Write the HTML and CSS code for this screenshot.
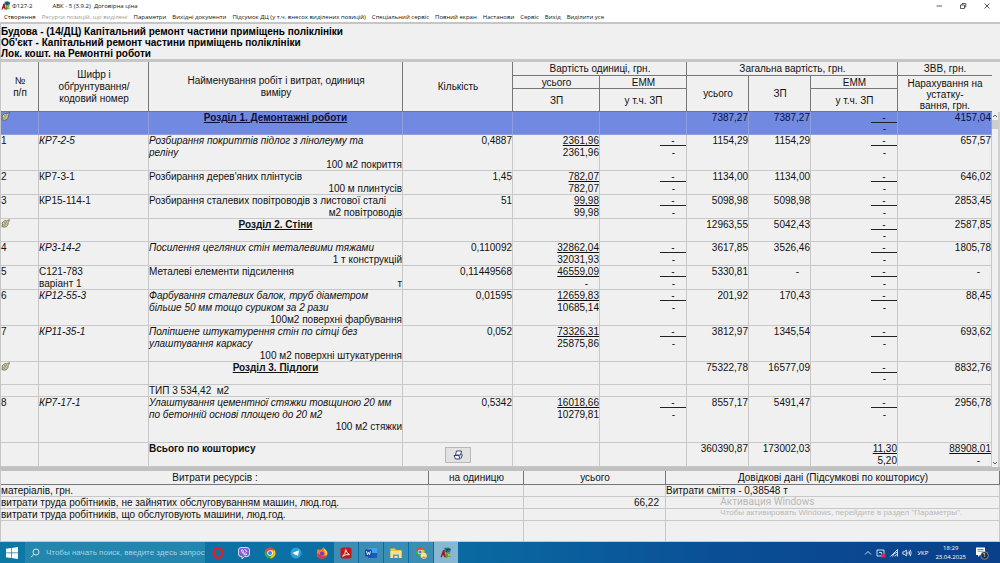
FILE: index.html
```
<!DOCTYPE html>
<html lang="uk">

<head>
  <meta charset="UTF-8">
  <title>АВК - 5 (3.9.2) Договірна ціна</title>
  <link rel="stylesheet" href="styles.css">
</head>

<body>

  <!-- shared icons -->
  <svg class="defs" aria-hidden="true">
    <symbol id="hand" viewBox="0 0 9 9">
      <path d="M1 4 4 1.500 6 2 8.300.6 8 2.500 6.800 3.600 7.200 5 5.500 7.600 3 8.200.8 7.400 1.500 6z" fill="#ece2a8" stroke="#4a4838" stroke-width=".7" />
      <path d="M2 5.600 5.500 4.200M2.300 6.800 5.600 5.600M3 3.700 6 3" stroke="#4a4838" stroke-width=".5" />
    </symbol>
    <symbol id="avk" viewBox="0 0 14 14">
      <path d="M5 1 9 .5 13 2 12 6 8 7 5 5z" fill="#2d7f8c" />
      <path d="M6 2 10 5M10 1 7 6M12 3 8 3" stroke="#15404c" stroke-width=".9" />
      <path d="M.5 12 3.500 3.500 5 3.500 7 12 5 12 4.500 10 2.800 10 2.300 12z" fill="#a4182c" />
      <path d="M7 6 9 8 12 6 11 9 13 12 10 11 7 13z" fill="#5d9a2c" />
      <path d="M9 8 13 9.500 10 10.500z" fill="#e5cf35" />
    </symbol>
    <symbol id="chrome" viewBox="0 0 24 24">
      <circle cx="12" cy="12" r="11" fill="#34a853" />
      <path d="M2.500 6.500A11 11 0 0 1 21.500 6.500L12 7 7.700 14.500z" fill="#ea4335" />
      <path d="M21.500 6.500A11 11 0 0 1 12 23L16.300 14.500 12 6.500z" fill="#fbbc05" />
      <circle cx="12" cy="12" r="5.500" fill="#fff" />
      <circle cx="12" cy="12" r="4.200" fill="#4285f4" />
    </symbol>
  </svg>

  <header class="titlebar">
    <svg class="app-icon"><use href="#avk" /></svg>
    <span class="form-no">Ф127-2</span>
    <span class="app-name">АВК - 5 (3.9.2)&nbsp; Договірна ціна</span>
    <div class="win-buttons">
      <button aria-label="Згорнути"><svg viewBox="0 0 8 8"><path d="M1.500 4H7" /></svg></button>
      <button aria-label="Відновити"><svg viewBox="0 0 8 8"><path d="M1.500 3H5.500V6.500H1.500zM3 3V1.500H6.800V5H5.500" /></svg></button>
      <button aria-label="Закрити"><svg viewBox="0 0 8 8"><path d="M1.500 1.500 6.500 6.500M6.500 1.500 1.500 6.500" /></svg></button>
    </div>
  </header>

  <nav class="menubar">
    <button>Створення</button>
    <button disabled>Ресурси позицій, що виділені</button>
    <button>Параметри</button>
    <button>Вихідні документи</button>
    <button>Підсумок ДЦ (у т.ч. внесок виділених позицій)</button>
    <button>Спеціальний сервіс</button>
    <button>Повний екран</button>
    <button>Настанови</button>
    <button>Сервіс</button>
    <button>Вихід</button>
    <button>Виділити усе</button>
  </nav>

  <section class="object-info">
    <p>Будова - (14/ДЦ) Капітальний ремонт частини приміщень поліклініки</p>
    <p>Об'єкт - Капітальний ремонт частини приміщень поліклініки</p>
    <p>Лок. кошт. на Ремонтні роботи</p>
  </section>

  <main class="estimate">
    <table class="works">
      <colgroup>
        <col class="c-num">
        <col class="c-code">
        <col>
        <col class="c-qty">
        <col class="c-unit">
        <col class="c-emm">
        <col class="c-total">
        <col class="c-zp">
        <col class="c-emm">
        <col class="c-zvv">
      </colgroup>
      <thead>
        <tr class="h-top">
          <th rowspan="3">№<br>п/п</th>
          <th rowspan="3">Шифр і<br>обґрунтування/<br>кодовий номер</th>
          <th rowspan="3">Найменування робіт і витрат, одиниця<br>виміру</th>
          <th rowspan="3">Кількість</th>
          <th colspan="2">Вартість одиниці, грн.</th>
          <th colspan="3">Загальна вартість, грн.</th>
          <th class="last">ЗВВ, грн.</th>
        </tr>
        <tr class="h-mid">
          <th>усього</th>
          <th>ЕММ</th>
          <th rowspan="2">усього</th>
          <th rowspan="2">ЗП</th>
          <th>ЕММ</th>
          <th rowspan="2" class="last tight">Нарахування на<br>устатку-<br>вання, грн.</th>
        </tr>
        <tr class="h-low">
          <th>ЗП</th>
          <th>у т.ч. ЗП</th>
          <th>у т.ч. ЗП</th>
        </tr>
      </thead>
      <tbody>
        <tr class="section selected">
          <td><svg class="hand"><use href="#hand" /></svg></td>
          <td></td>
          <td class="name">Розділ 1. Демонтажні роботи</td>
          <td></td>
          <td></td>
          <td></td>
          <td>7387,27</td>
          <td>7387,27</td>
          <td><span class="none">-</span><span class="dash">-</span></td>
          <td>4157,04</td>
        </tr>
        <tr class="lines-3 own">
          <td>1</td>
          <td>КР7-2-5</td>
          <td><span class="work">Розбирання покриттів підлог з лінолеуму та реліну</span><span class="unit">100 м2 покриття</span></td>
          <td>0,4887</td>
          <td><u>2361,96</u><br>2361,96</td>
          <td><span class="none">-</span><span class="dash">-</span></td>
          <td>1154,29</td>
          <td>1154,29</td>
          <td><span class="none">-</span><span class="dash">-</span></td>
          <td>657,57</td>
        </tr>
        <tr class="lines-2">
          <td>2</td>
          <td>КР7-3-1</td>
          <td><span class="work">Розбирання дерев'яних плінтусів</span><span class="unit">100 м плинтусів</span></td>
          <td>1,45</td>
          <td><u>782,07</u><br>782,07</td>
          <td><span class="none">-</span><span class="dash">-</span></td>
          <td>1134,00</td>
          <td>1134,00</td>
          <td><span class="none">-</span><span class="dash">-</span></td>
          <td>646,02</td>
        </tr>
        <tr class="lines-2">
          <td>3</td>
          <td>КР15-114-1</td>
          <td><span class="work">Розбирання сталевих повітроводів з листової сталі</span><span class="unit">м2 повітроводів</span></td>
          <td>51</td>
          <td><u>99,98</u><br>99,98</td>
          <td><span class="none">-</span><span class="dash">-</span></td>
          <td>5098,98</td>
          <td>5098,98</td>
          <td><span class="none">-</span><span class="dash">-</span></td>
          <td>2853,45</td>
        </tr>
        <tr class="section">
          <td><svg class="hand"><use href="#hand" /></svg></td>
          <td></td>
          <td class="name">Розділ 2. Стіни</td>
          <td></td>
          <td></td>
          <td></td>
          <td>12963,55</td>
          <td>5042,43</td>
          <td><span class="none">-</span><span class="dash">-</span></td>
          <td>2587,85</td>
        </tr>
        <tr class="lines-2 own">
          <td>4</td>
          <td>КР3-14-2</td>
          <td><span class="work">Посилення цегляних стін металевими тяжами</span><span class="unit">1 т конструкцій</span></td>
          <td>0,110092</td>
          <td><u>32862,04</u><br>32031,93</td>
          <td><span class="none">-</span><span class="dash">-</span></td>
          <td>3617,85</td>
          <td>3526,46</td>
          <td><span class="none">-</span><span class="dash">-</span></td>
          <td>1805,78</td>
        </tr>
        <tr class="lines-2">
          <td>5</td>
          <td>С121-783<br>варіант 1</td>
          <td><span class="work">Металеві елементи підсилення</span><span class="unit">т</span></td>
          <td>0,11449568</td>
          <td><u>46559,09</u><span class="dash">-</span></td>
          <td><span class="none">-</span><span class="dash">-</span></td>
          <td>5330,81</td>
          <td><span class="dash">-</span></td>
          <td><span class="none">-</span><span class="dash">-</span></td>
          <td><span class="dash">-</span></td>
        </tr>
        <tr class="lines-3 own">
          <td>6</td>
          <td>КР12-55-3</td>
          <td><span class="work">Фарбування сталевих балок, труб діаметром більше 50 мм тощо суриком за 2 рази</span><span class="unit">100м2 поверхні фарбування</span></td>
          <td>0,01595</td>
          <td><u>12659,83</u><br>10685,14</td>
          <td><span class="none">-</span><span class="dash">-</span></td>
          <td>201,92</td>
          <td>170,43</td>
          <td><span class="none">-</span><span class="dash">-</span></td>
          <td>88,45</td>
        </tr>
        <tr class="lines-3 own">
          <td>7</td>
          <td>КР11-35-1</td>
          <td><span class="work">Поліпшене штукатурення стін по сітці без улаштування каркасу</span><span class="unit">100 м2 поверхні штукатурення</span></td>
          <td>0,052</td>
          <td><u>73326,31</u><br>25875,86</td>
          <td><span class="none">-</span><span class="dash">-</span></td>
          <td>3812,97</td>
          <td>1345,54</td>
          <td><span class="none">-</span><span class="dash">-</span></td>
          <td>693,62</td>
        </tr>
        <tr class="section">
          <td><svg class="hand"><use href="#hand" /></svg></td>
          <td></td>
          <td class="name">Розділ 3. Підлоги</td>
          <td></td>
          <td></td>
          <td></td>
          <td>75322,78</td>
          <td>16577,09</td>
          <td><span class="none">-</span><span class="dash">-</span></td>
          <td>8832,76</td>
        </tr>
        <tr class="lines-1">
          <td></td>
          <td></td>
          <td>ТИП 3 534,42&nbsp; м2</td>
          <td></td>
          <td></td>
          <td></td>
          <td></td>
          <td></td>
          <td></td>
          <td></td>
        </tr>
        <tr class="lines-4 own">
          <td>8</td>
          <td>КР7-17-1</td>
          <td><span class="work">Улаштування цементної стяжки товщиною 20 мм по бетонній основі площею до 20 м2</span><span class="unit">100 м2 стяжки</span></td>
          <td>0,5342</td>
          <td><u>16018,66</u><br>10279,81</td>
          <td><span class="none">-</span><span class="dash">-</span></td>
          <td>8557,17</td>
          <td>5491,47</td>
          <td><span class="none">-</span><span class="dash">-</span></td>
          <td>2956,78</td>
        </tr>
        <tr class="total">
          <td></td>
          <td></td>
          <td class="name">Всього по кошторису</td>
          <td class="tool">
            <button aria-label="Перерахувати">
              <svg viewBox="0 0 10 10"><path d="M3.500 1H8.500L7.800 5H2.500zM1 5.500H6L7 9H2.500zM8 3.500 9.300 5 8 8.500" /></svg>
            </button>
          </td>
          <td></td>
          <td></td>
          <td>360390,87</td>
          <td>173002,03</td>
          <td><u>11,30</u><br>5,20</td>
          <td><u>88908,01</u><span class="dash">-</span></td>
        </tr>
      </tbody>
    </table>
    <div class="scrollbar">
      <button aria-label="Вгору"><svg viewBox="0 0 6 6"><path d="M1 4 3 2 5 4" /></svg></button>
      <div class="thumb"></div>
      <button aria-label="Вниз"><svg viewBox="0 0 6 6"><path d="M1 2 3 4 5 2" /></svg></button>
    </div>
  </main>

  <section class="resources">
    <table>
      <colgroup>
        <col>
        <col class="r-unit">
        <col class="r-total">
        <col class="r-info">
      </colgroup>
      <thead>
        <tr>
          <th>Витрати ресурсів :</th>
          <th>на одиницю</th>
          <th>усього</th>
          <th>Довідкові дані (Підсумкові по кошторису)</th>
        </tr>
      </thead>
      <tbody>
        <tr>
          <td>матеріалів, грн.</td>
          <td></td>
          <td></td>
          <td>Витрати сміття - 0,38548 т</td>
        </tr>
        <tr>
          <td>витрати труда робітників, не зайнятих обслуговуванням машин, люд.год.</td>
          <td></td>
          <td>66,22</td>
          <td></td>
        </tr>
        <tr>
          <td>витрати труда робітників, що обслуговують машини, люд.год.</td>
          <td></td>
          <td></td>
          <td></td>
        </tr>
        <tr class="rest">
          <td></td>
          <td></td>
          <td></td>
          <td></td>
        </tr>
      </tbody>
    </table>
    <div class="watermark">
      <p class="big">Активация Windows</p>
      <p>Чтобы активировать Windows, перейдите в раздел "Параметры".</p>
    </div>
  </section>

  <footer class="taskbar">
    <button class="start" aria-label="Пуск">
      <svg viewBox="0 0 12 12"><path d="M0 1.700 5 1V5.600H0zM5.700.9 12 0V5.600H5.700zM0 6.300H5V11L0 10.300zM5.700 6.300H12V12L5.700 11.100z" fill="#fff" /></svg>
    </button>
    <label class="search">
      <svg viewBox="0 0 10 10"><circle cx="6" cy="4" r="3" /><path d="M4 6.200 1 9.300" /></svg>
      <input type="text" aria-label="Поиск" placeholder="Чтобы начать поиск, введите здесь запрос">
    </label>
    <div class="pinned">
      <button aria-label="Opera">
        <svg viewBox="0 0 12 12"><ellipse cx="6" cy="6" rx="4.300" ry="4.700" fill="none" stroke="#d8202f" stroke-width="2.600" /></svg>
      </button>
      <button aria-label="Viber">
        <svg viewBox="0 0 12 12"><path d="M3 .5H9Q11.500.5 11.500 3V7Q11.500 9.600 9 9.600H6.500L4 12V9.600H3Q.5 9.600.5 7V3Q.5.5 3 .5z" fill="#7d62d6" stroke="#e8e2ff" stroke-width=".9" /><path d="M3.700 2.800Q3 4 4.500 6 6 8 8 8L8.600 7 7.300 6 6.500 6.500 5.200 4.800 5.500 4 4.600 2.700zM6.500 2.500Q8.700 2.800 8.800 5" fill="none" stroke="#fff" stroke-width=".8" /></svg>
      </button>
      <button aria-label="Chrome"><svg><use href="#chrome" /></svg></button>
      <button aria-label="Telegram">
        <svg viewBox="0 0 12 12"><circle cx="6" cy="6" r="5.500" fill="#2ba0da" /><path d="M2.200 6 9 3.200 8 9 5.800 7.500 4.800 8.400 4.600 6.900z" fill="#fff" /></svg>
      </button>
      <button aria-label="Firefox">
        <svg viewBox="0 0 12 12"><path d="M1 4 2 1.800 3.500 3Q5 2 5.500 2.500L7.500.3Q8 2 10 3.200 11.700 5 11.300 7.500 10 11.500 6 11.600 1.500 11.300.8 7.500z" fill="#ff7a28" /><path d="M7.500.3Q8 2 10 3.200 11.700 5 11.300 7.500L9.500 8 8.500 4z" fill="#ffd43a" /><path d="M1 6Q1 11 6 11.600 9 11.400 10.500 9.300L6 9z" fill="#ee2d55" /><circle cx="6" cy="6.600" r="2.200" fill="#7a3bc8" /></svg>
      </button>
    </div>
    <div class="running">
      <button aria-label="Acrobat">
        <svg viewBox="0 0 12 12"><rect x=".5" y=".5" width="11" height="11" rx="2" fill="#c4161c" /><path d="M5.700 2.500Q6.300 6 9.500 7.600 6 6.800 2.600 9.300 5.600 6.800 5.700 2.500z" fill="none" stroke="#fff" stroke-width=".9" /></svg>
      </button>
      <button aria-label="Word">
        <svg viewBox="0 0 12 12"><rect x="3" y="1" width="9" height="10" rx="1" fill="#41a5ee" /><rect x="3" y="6" width="9" height="5" fill="#185abd" /><rect x="0" y="2.500" width="7" height="7" rx="1" fill="#174ea6" /><path d="M1.500 4.200 2.500 7.800 3.500 5 4.500 7.800 5.500 4.200" fill="none" stroke="#fff" stroke-width=".8" /></svg>
      </button>
      <button aria-label="Провідник">
        <svg viewBox="0 0 12 12"><path d="M.5 1.500H5L6 3H11.500V11H.5z" fill="#f5c242" /><path d="M.5 4H11.500V11H.5z" fill="#fde28a" /><path d="M3 11V7.500H9V11H7.500V9H4.500V11z" fill="#4e9fd8" /></svg>
      </button>
      <button aria-label="Chrome, профіль">
        <svg viewBox="0 0 12 12"><use href="#chrome" width="10" height="10" /><circle cx="8.800" cy="8.800" r="3" fill="#f5e2a0" /><path d="M6.800 11Q8.800 7.500 10.800 11z" fill="#d99a28" /></svg>
      </button>
      <button class="active" aria-label="АВК-5"><svg><use href="#avk" /></svg></button>
    </div>
    <div class="tray">
      <svg viewBox="0 0 10 10"><path d="M2 6.500 5 3.500 8 6.500" /></svg>
      <svg viewBox="0 0 10 10"><path d="M1 2H8V8H1zM3 4.500H5.500V6.500" /><rect x="5.500" y="5.500" width="4" height="4" fill="#e0244a" stroke="none" /></svg>
      <svg viewBox="0 0 10 10"><path d="M1.500 8.500 8.500 1.500V8.500M3.500 8.500Q4 5 8.500 4M5.800 8.500Q6 7 8.500 6.500" /></svg>
      <svg viewBox="0 0 10 10"><path d="M.8 3.800H2.200L4.300 2V8L2.200 6.200H.8zM5.700 3.800Q6.500 5 5.700 6.200M7 2.700Q8.300 5 7 7.300M8.300 1.700Q10 5 8.300 8.300" /></svg>
      <span class="lang">УКР</span>
      <time class="clock" datetime="2025-04-23T18:29">18:29<br>23.04.2025</time>
      <button class="notify" aria-label="Сповіщення">
        <svg viewBox="0 0 14 14"><path d="M1 1.500H10V9H5L3 11V9H1z" fill="#fff" /><path d="M2.500 3.500H8.500M2.500 5.200H8.500" stroke="#2a5c98" stroke-width=".7" /><circle cx="9.500" cy="9.500" r="3.800" fill="#1e2c3c" stroke="#b9c8d8" stroke-width=".6" /></svg>
        <span class="count">1</span>
      </button>
    </div>
  </footer>

</body>

</html>
```
FILE: styles.css
```
* {
  box-sizing: border-box;
}

body {
  margin: 0;
  min-height: 100vh;
  display: flex;
  flex-direction: column;
  font-family: "Liberation Sans", Arial, sans-serif;
  font-size: 10px;
  line-height: 12px;
  color: #111;
  background-color: #f0f0f0;
}

p {
  margin: 0;
}

button {
  padding: 0;
  border: 0;
  background: none;
  font: inherit;
  color: inherit;
}

.defs {
  position: absolute;
  width: 0;
  height: 0;
}

/* window title and menu */
.titlebar,
.menubar {
  display: flex;
  align-items: center;
  height: 12px;
  background-color: #fff;
  font-family: "Open Sans", sans-serif;
  font-size: 6px;
  line-height: 10px;
}

.titlebar {
  padding-left: 1px;
}

.app-icon {
  width: 10px;
  height: 10px;
  margin-right: 1px;
}

.app-name {
  margin-left: 20px;
}

.win-buttons {
  display: flex;
  gap: 16px;
  margin-left: auto;
  padding-right: 9px;
}

.win-buttons button,
.win-buttons svg {
  display: block;
  width: 8px;
  height: 8px;
}

.win-buttons svg,
.scrollbar svg {
  fill: none;
  stroke: #333;
  stroke-width: 0.8;
}

.menubar {
  gap: 6px;
  padding-left: 4px;
  border-bottom: 2px solid #c6c6c6;
  white-space: nowrap;
}

.menubar button:disabled {
  color: #999;
}

/* names of the project */
.object-info {
  padding-top: 2px;
  line-height: 11px;
  font-weight: bold;
  color: #000;
  border-left: 1px solid #c6c6c6;
  border-bottom: 3px solid #c6c6c6;
}

/* estimate grid */
.estimate {
  display: flex;
  border-left: 1px solid #c6c6c6;
}

table {
  width: 100%;
  table-layout: fixed;
  border-spacing: 0;
}

th,
td {
  padding: 0;
  vertical-align: top;
  font-weight: normal;
}

th {
  vertical-align: middle;
  box-shadow: inset -1px -1px 0 #777;
}

.c-num {
  width: 38px;
}

.c-code,
.c-qty {
  width: 110px;
}

.c-unit,
.c-emm {
  width: 87px;
}

.c-total,
.c-zp {
  width: 62px;
}

.c-zvv {
  width: 94px;
}

.h-top {
  height: 14px;
}

.h-mid {
  height: 13px;
}

.h-low {
  height: 23px;
}

.works .last {
  box-shadow: inset 0 -1px 0 #777;
}

.works .tight {
  line-height: 11px;
}

.works td {
  padding-right: 1px;
  text-align: right;
  box-shadow: inset -1px -1px 0 #c8c8c8;
}

.works td:nth-child(-n + 3) {
  text-align: left;
}

.section {
  height: 23px;
}

.total {
  height: 24px;
}

.lines-1 {
  height: 12px;
}

.lines-2 {
  height: 24px;
}

.lines-3 {
  height: 36px;
}

.lines-4 {
  height: 46px;
}

.hand {
  display: block;
  width: 9px;
  height: 9px;
}

.work,
.unit,
.dash {
  display: block;
}

.work {
  padding-right: 8px;
}

.unit {
  text-align: right;
}

.own td:nth-child(2),
.own .work {
  font-style: italic;
}

.works .section .name {
  text-align: center;
  font-weight: bold;
  text-decoration: underline;
}

.total .name {
  font-weight: bold;
}

.works .selected td {
  color: #0a0f3c;
  background-color: #7189e0;
  box-shadow: inset -1px -1px 0 #8f9fdc;
}

/* empty value above the line */
.none {
  display: block;
  width: 26px;
  height: 11px;
  margin: 0 0 1px auto;
  border-bottom: 1px solid #222;
  text-align: center;
}

.section .none {
  margin-bottom: 0;
}

.dash {
  padding-right: 11px;
}

.works .tool {
  text-align: center;
  vertical-align: middle;
}

.tool button {
  display: block;
  width: 26px;
  height: 16px;
  margin: 0 auto;
  border: 1px solid #b8b8b8;
  background-color: #e2e2e2;
}

.tool svg {
  display: block;
  width: 10px;
  height: 10px;
  margin: 0 auto;
  fill: #fff;
  stroke: #34437e;
}

.scrollbar {
  flex: none;
  display: flex;
  flex-direction: column;
  width: 8px;
  margin-top: 50px;
  border-right: 2px solid #d0d0d0;
}

.scrollbar svg {
  display: block;
  width: 6px;
  height: 8px;
}

.thumb {
  height: 9px;
  margin-bottom: auto;
  background-color: #cdcdcd;
}

/* resources */
.resources {
  position: relative;
  flex: 1;
  display: flex;
  border-top: 4px solid #c0c0c0;
  border-left: 1px solid #c6c6c6;
}

.resources th {
  height: 14px;
}

.resources td {
  height: 12px;
  box-shadow: inset -1px -1px 0 #c8c8c8;
}

.resources td:nth-child(3) {
  padding-right: 7px;
  text-align: right;
}

.resources .rest td {
  height: auto;
}

.r-unit {
  width: 95px;
}

.r-total {
  width: 142px;
}

.r-info {
  width: 334px;
}

.watermark {
  position: absolute;
  top: 26px;
  right: 38px;
  font-size: 8px;
  line-height: 11px;
  color: #b9b9b9;
}

.watermark .big {
  font-family: Roboto, sans-serif;
  font-size: 10px;
  line-height: 10px;
}

/* taskbar */
.taskbar {
  display: flex;
  align-items: center;
  height: 21px;
  font-family: "Open Sans", sans-serif;
  color: #fff;
  background: linear-gradient(to right, #0d78a6, #0a6ba2 45%, #0a4f96 72%, #0a3f8a);
}

.taskbar svg {
  display: block;
  width: 12px;
  height: 12px;
}

.start {
  width: 25px;
  padding-left: 6px;
}

.search {
  display: flex;
  align-items: center;
  gap: 6px;
  width: 180px;
  height: 21px;
  padding-left: 5px;
  background-color: #2286ad;
}

.search svg,
.tray svg {
  flex: none;
  width: 10px;
  height: 10px;
  fill: none;
  stroke: #fff;
  stroke-width: 0.8;
}

.search input {
  flex: 1;
  min-width: 0;
  padding: 0;
  border: 0;
  background: none;
  font-family: "Liberation Sans", Arial, sans-serif;
  font-size: 8px;
  color: #fff;
}

.search input::placeholder {
  color: #a5d3e6;
}

.pinned {
  display: flex;
  gap: 14px;
  padding: 0 6px 0 7px;
}

.running {
  display: flex;
  gap: 1px;
}

.running button {
  display: flex;
  align-items: center;
  justify-content: center;
  width: 24px;
  height: 21px;
  background-color: #3c8db4;
}

.running .active {
  background-color: #86b8d2;
}

.tray {
  display: flex;
  align-items: center;
  gap: 3px;
  margin-left: auto;
  padding-right: 11px;
  font-size: 6px;
}

.lang {
  margin: 0 4px 0 2px;
}

.clock {
  line-height: 9px;
  text-align: center;
}

.notify {
  position: relative;
  margin-left: 6px;
}

.tray .notify svg {
  width: 14px;
  height: 14px;
  stroke: none;
}

.count {
  position: absolute;
  right: 3px;
  bottom: 0;
  line-height: 9px;
}
```
